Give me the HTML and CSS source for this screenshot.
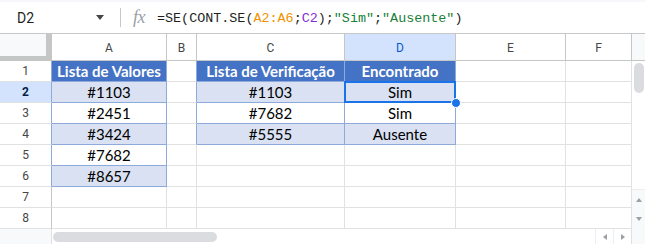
FILE: index.html
```html
<!DOCTYPE html>
<html lang="pt">
<head>
<meta charset="utf-8">
<link rel="stylesheet" href="styles.css">
</head>
<body>
<div class="app">
  <div class="formula-bar">
    <div class="namebox">D2</div>
    <div class="nb-arrow"></div>
    <div class="divider"></div>
    <div class="fx">fx</div>
    <div class="formula">=SE(CONT.SE(<span class="c-orange">A2:A6</span>;<span class="c-purple">C2</span>);<span class="c-green">"Sim"</span>;<span class="c-green">"Ausente"</span>)</div>
  </div>
  <div class="sheet">
    <!-- header row -->
    <div class="corner"></div>
    <div class="colh">A</div>
    <div class="colh">B</div>
    <div class="colh">C</div>
    <div class="colh sel">D</div>
    <div class="colh">E</div>
    <div class="colh">F</div>
    <div class="vs-head"></div>
    <div class="vscroll"><div class="vthumb"></div><div class="varrows"><span class="tri up"></span><span class="tri down"></span></div></div>

    <!-- row 1 -->
    <div class="rowh bl">1</div>
    <div class="cell th">Lista de Valores</div>
    <div class="cell bl"></div>
    <div class="cell th">Lista de Verificação</div>
    <div class="cell th">Encontrado</div>
    <div class="cell"></div>
    <div class="cell"></div>

    <!-- row 2 -->
    <div class="rowh sel bl">2</div>
    <div class="cell td fill">#1103</div>
    <div class="cell bl"></div>
    <div class="cell td fill">#1103</div>
    <div class="cell td fill active">Sim<div class="selbox"></div><div class="handle"></div></div>
    <div class="cell"></div>
    <div class="cell"></div>

    <!-- row 3 -->
    <div class="rowh bl">3</div>
    <div class="cell td">#2451</div>
    <div class="cell bl"></div>
    <div class="cell td">#7682</div>
    <div class="cell td">Sim</div>
    <div class="cell"></div>
    <div class="cell"></div>

    <!-- row 4 -->
    <div class="rowh bl">4</div>
    <div class="cell td fill">#3424</div>
    <div class="cell bl"></div>
    <div class="cell td fill">#5555</div>
    <div class="cell td fill">Ausente</div>
    <div class="cell"></div>
    <div class="cell"></div>

    <!-- row 5 -->
    <div class="rowh bl">5</div>
    <div class="cell td">#7682</div>
    <div class="cell"></div>
    <div class="cell"></div>
    <div class="cell"></div>
    <div class="cell"></div>
    <div class="cell"></div>

    <!-- row 6 -->
    <div class="rowh bl">6</div>
    <div class="cell td fill">#8657</div>
    <div class="cell"></div>
    <div class="cell"></div>
    <div class="cell"></div>
    <div class="cell"></div>
    <div class="cell"></div>

    <!-- row 7 -->
    <div class="rowh">7</div>
    <div class="cell"></div>
    <div class="cell"></div>
    <div class="cell"></div>
    <div class="cell"></div>
    <div class="cell"></div>
    <div class="cell"></div>

    <!-- row 8 -->
    <div class="rowh">8</div>
    <div class="cell"></div>
    <div class="cell"></div>
    <div class="cell"></div>
    <div class="cell"></div>
    <div class="cell"></div>
    <div class="cell"></div>

    <!-- bottom scroll row -->
    <div class="hs-left"></div>
    <div class="hscroll">
      <div class="hthumb"></div>
      <div class="harrows"><span class="hbtn"><span class="tri left"></span></span><span class="hbtn"><span class="tri right"></span></span></div>
    </div>
    <div class="hs-corner"></div>
  </div>
</div>
</body>
</html>
```

FILE: styles.css
```css
* { box-sizing: border-box; }
html, body { margin: 0; padding: 0; background: #fff; }
body { width: 645px; height: 244px; overflow: hidden; font-family: Roboto, "Liberation Sans", sans-serif; }

.app { width: 645px; height: 244px; display: flex; flex-direction: column; }

.formula-bar {
  height: 34px;
  border-top: 2px solid #f6f8fc;
  border-bottom: 1px solid #c7c7c7;
  display: flex;
  align-items: center;
  position: relative;
}
.namebox { width: 17px; margin-left: 17px; font-size: 14px; color: #1f1f1f; width: 76px; }
.nb-arrow {
  width: 0; height: 0;
  border-left: 4.5px solid transparent;
  border-right: 4.5px solid transparent;
  border-top: 5px solid #444746;
  margin-left: 3px;
}
.divider { width: 1px; height: 19px; background: #c7c7c7; margin-left: 16px; }
.fx {
  margin-left: 12px;
  font-family: "Liberation Serif", serif;
  font-style: italic;
  font-size: 18px;
  color: #9aa0a6;
  letter-spacing: -0.5px;
  width: 24px;
}
.formula {
  font-family: "Liberation Mono", monospace;
  font-size: 13.4px;
  color: #1f1f1f;
  padding-top: 1px;
}
.c-orange { color: #f09300; }
.c-purple { color: #8430ce; }
.c-green { color: #188038; }

.sheet {
  display: grid;
  grid-template-columns: 52px 115px 30px 148px 111px 110px 66px 13px;
  grid-template-rows: 27px repeat(8, 21px) 15px;
  flex: none;
}

.corner {
  background: #f8f9fa;
  border-right: 6px solid #c4c7c5;
  border-bottom: 5px solid #c4c7c5;
}
.colh {
  display: flex; align-items: center; justify-content: center;
  font-size: 12px; color: #444746;
  border-right: 1px solid #c4c7c5;
  border-bottom: 1px solid #c4c7c5;
  padding-top: 2px;
}
.colh.sel { background: #d3e3fd; color: #0b57d0; }
.vs-head { background: #f8f9fa; border-bottom: 1px solid #c4c7c5; }

.vscroll {
  grid-column: 8; grid-row: 2 / 10;
  background: #fff;
  display: flex; flex-direction: column; align-items: center;
  position: relative;
}
.vthumb { width: 10px; height: 30px; background: #dadce0; border-radius: 5px; margin-top: 2px; }
.varrows {
  margin-top: auto;
  width: 13px; height: 40px;
  background: #f8f9fa;
  display: flex; flex-direction: column; align-items: center; justify-content: space-around;
  border-top: 1px solid #eceef1;
}

.tri { display: block; width: 0; height: 0; }
.tri.up { border-left: 3.5px solid transparent; border-right: 3.5px solid transparent; border-bottom: 4px solid #9aa0a6; }
.tri.down { border-left: 3.5px solid transparent; border-right: 3.5px solid transparent; border-top: 4px solid #9aa0a6; }
.tri.left { border-top: 3.5px solid transparent; border-bottom: 3.5px solid transparent; border-right: 4px solid #9aa0a6; }
.tri.right { border-top: 3.5px solid transparent; border-bottom: 3.5px solid transparent; border-left: 4px solid #9aa0a6; }

.rowh {
  display: flex; align-items: center; justify-content: center;
  font-size: 12px; color: #444746;
  border-right: 1px solid #c4c7c5;
  border-bottom: 1px solid #e1e1e1;
}
.rowh.sel { background: #d3e3fd; color: #041e49; font-weight: bold; }

.cell {
  border-right: 1px solid #e1e1e1;
  border-bottom: 1px solid #e1e1e1;
  display: flex; align-items: center; justify-content: center;
  font-family: Lato, "Open Sans", sans-serif;
  font-size: 15px;
  color: #000;
  position: relative;
  white-space: nowrap;
}
.rowh.bl { border-right-color: #8eaadb; }
.cell.bl { border-right-color: #8eaadb; }
.cell.th {
  background: #4472c4; color: #fff; font-weight: bold;
  border-right-color: #8eaadb; border-bottom-color: #8eaadb;
}
.cell.td { border-right-color: #8eaadb; border-bottom-color: #8eaadb; }
.cell.fill { background: #d9e1f2; }

.selbox {
  position: absolute; left: -1px; top: -1px; right: -1px; bottom: -1px;
  border: 2px solid #1a73e8;
}
.handle {
  position: absolute; right: -6px; bottom: -6px;
  width: 10px; height: 10px; border-radius: 50%;
  background: #1a73e8; border: 1px solid #fff;
  z-index: 2;
}

.hs-left { background: #f8f9fa; border-right: 1px solid #e1e1e1; }
.hscroll {
  grid-column: 2 / 8;
  background: #fff;
  display: flex; align-items: center;
  border-right: 1px solid #e1e1e1;
}
.hthumb { width: 164px; height: 10px; background: #dadce0; border-radius: 5px; margin-left: 1px; }
.harrows { margin-left: auto; display: flex; height: 100%; }
.hbtn {
  width: 18px; height: 100%;
  display: flex; align-items: center; justify-content: center;
  border-left: 1px solid #eceef1;
}
.hs-corner { background: #f8f9fa; }
```
